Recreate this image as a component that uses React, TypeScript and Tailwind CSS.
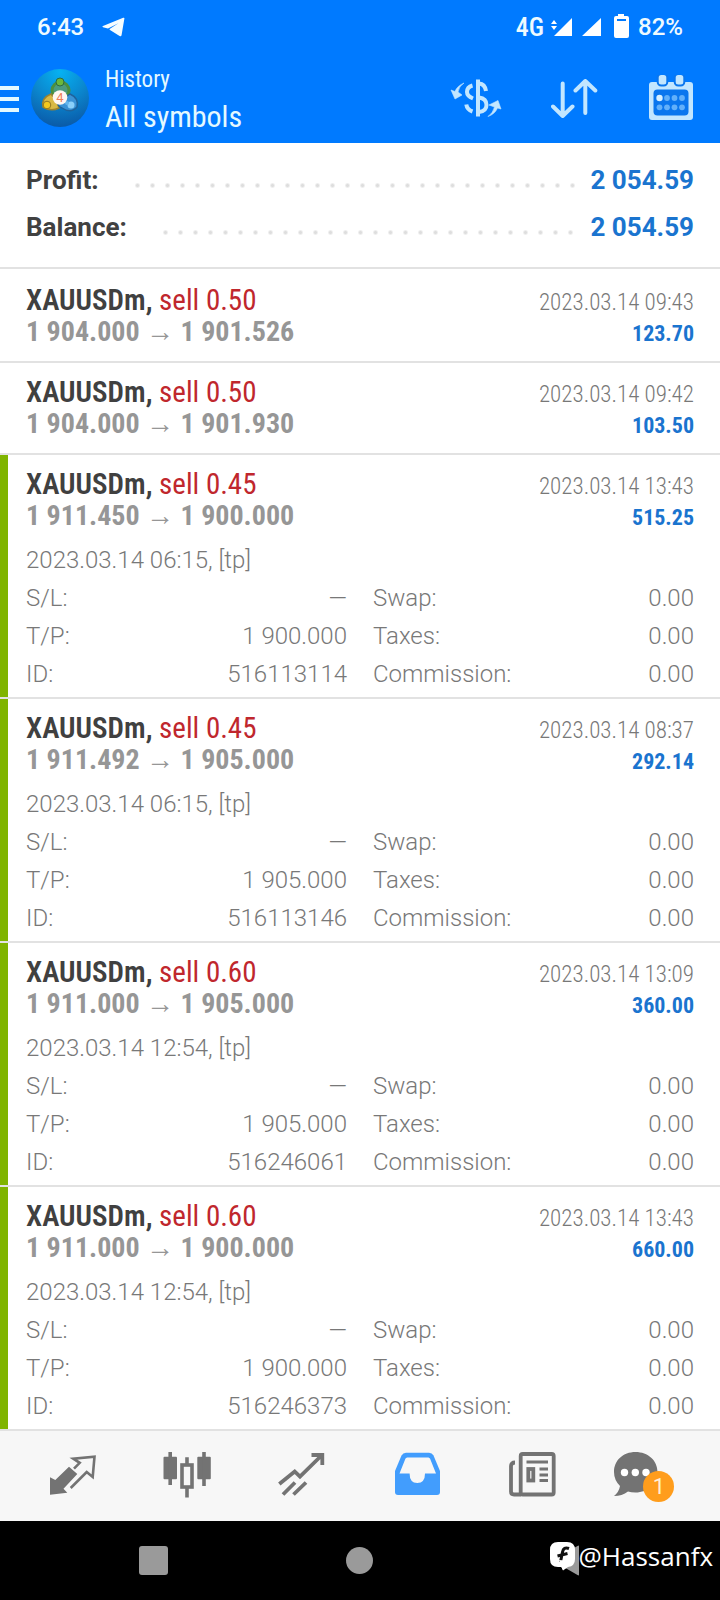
import React from "react";

type Detail = { opened: string; tp: string; id: string };

type Trade = {
  lots: string;
  from: string;
  to: string;
  time: string;
  profit: string;
  detail?: Detail;
};

const trades: Trade[] = [
  { lots: "0.50", from: "1 904.000", to: "1 901.526", time: "2023.03.14 09:43", profit: "123.70" },
  { lots: "0.50", from: "1 904.000", to: "1 901.930", time: "2023.03.14 09:42", profit: "103.50" },
  {
    lots: "0.45", from: "1 911.450", to: "1 900.000", time: "2023.03.14 13:43", profit: "515.25",
    detail: { opened: "2023.03.14 06:15, [tp]", tp: "1 900.000", id: "516113114" },
  },
  {
    lots: "0.45", from: "1 911.492", to: "1 905.000", time: "2023.03.14 08:37", profit: "292.14",
    detail: { opened: "2023.03.14 06:15, [tp]", tp: "1 905.000", id: "516113146" },
  },
  {
    lots: "0.60", from: "1 911.000", to: "1 905.000", time: "2023.03.14 13:09", profit: "360.00",
    detail: { opened: "2023.03.14 12:54, [tp]", tp: "1 905.000", id: "516246061" },
  },
  {
    lots: "0.60", from: "1 911.000", to: "1 900.000", time: "2023.03.14 13:43", profit: "660.00",
    detail: { opened: "2023.03.14 12:54, [tp]", tp: "1 900.000", id: "516246373" },
  },
];

function StatusBar() {
  return (
    <div className="flex h-[53px] items-center justify-between px-[37px] text-[24px] font-medium leading-[28px] text-[#eefaff]">
      <div className="flex items-center gap-[18px]">
        <span>6:43</span>
        <svg width="23" height="20" viewBox="0 0 23 20" aria-hidden="true">
          <path d="M22.4 1.6 19.6 18Q19.2 19.8 17.6 19L7.6 12.8V12L16.4 6.2 6 11.6 1 10.2Q-.2 9.6 1 8.9L21.2.8Q22.6.4 22.4 1.6Z" fill="#f6fdff" />
        </svg>
      </div>
      <div className="flex items-center">
        <span className="font-['Roboto_Condensed','Roboto',sans-serif] text-[26px]">4G</span>
        <svg className="ml-[7px]" width="79" height="26" viewBox="0 0 79 26" fill="#fff" aria-hidden="true">
          <path d="M0 10 3 6 6 10ZM0 12 3 16 6 12ZM21 4V22H3ZM50 4V22H31ZM67 0H73V2H76Q78 2 78 4V22Q78 24 76 24H65Q63 24 63 22V4Q63 2 65 2H67Z" />
          <path d="M66 5H75V7H66Z" fill="#007aff" />
        </svg>
        <span className="ml-[8px]">82%</span>
      </div>
    </div>
  );
}

function AppLogo() {
  return (
    <svg className="ml-[12px]" width="58" height="58" viewBox="0 0 58 58" aria-hidden="true">
      <defs>
        <radialGradient id="disc" cx="50%" cy="5%" r="95%">
          <stop offset="0" stopColor="#06b2f2" />
          <stop offset="0.5" stopColor="#0b88cf" />
          <stop offset="1" stopColor="#0a5aa8" />
        </radialGradient>
      </defs>
      <circle cx="29" cy="29" r="29" fill="url(#disc)" />
      <circle cx="29.500" cy="21.500" r="8.500" fill="#4c9b7c" stroke="#4d8f3c" strokeWidth="3" />
      <path d="M20 25Q10 29 12 38Q20 43 28 39L26 32Z" fill="#d8b945" stroke="#9b8330" strokeWidth="1.500" />
      <path d="M39 25Q48 29 46 38Q40 45 31 39Q26 37 27 33Z" fill="#3b93d6" stroke="#1f639c" strokeWidth="1.500" />
      <circle cx="29" cy="13" r="4" fill="#6cb83c" stroke="#2c6a42" />
      <circle cx="16" cy="36" r="3.800" fill="#f3c81e" stroke="#8e7726" />
      <circle cx="40" cy="36" r="3.500" fill="#8bd0fa" />
      <circle cx="36" cy="34" r="2" fill="#65b6ec" />
      <circle cx="29" cy="28.500" r="7.300" fill="#fff7f2" />
      <text x="29" y="33" textAnchor="middle" fontSize="13" fill="#ee7f5a">4</text>
    </svg>
  );
}

function AppHeader() {
  return (
    <header className="flex h-[90px] items-center pr-[27px] text-[#e4f9ff]">
      <button type="button" aria-label="Menu" className="flex w-[19px] flex-col gap-[7px] pt-[2px]">
        <span className="h-[4px] w-full bg-[#e4f9ff]" />
        <span className="h-[4px] w-full bg-[#e4f9ff]" />
        <span className="h-[4px] w-full bg-[#e4f9ff]" />
      </button>
      <AppLogo />
      <div className="ml-[16px] flex-1 pt-[6px] font-['Roboto_Condensed','Roboto',sans-serif]">
        <p className="text-[23px] leading-[32px]">History</p>
        <h1 className="text-[30px] leading-[42px]">All symbols</h1>
      </div>
      <div className="flex items-center gap-[50px] text-[#c2e6ff]">
        <button type="button" aria-label="Currency">
          <svg className="block" width="49" height="40" viewBox="1 0 49 40" overflow="visible" fill="none" stroke="currentColor" strokeWidth="4" aria-hidden="true">
            <path d="M27 1.500V38.500" />
            <path d="M28 5.500Q34 6 35 13M28 19.500Q35.500 20.500 35.500 27Q35.500 33 28 34" />
            <path d="M21.500 7.500Q16 9 16 14Q16 18 22 20.500M15.300 26.500Q16 31.500 21.500 33.500" />
            <path d="M13 5Q8 8 7 14L11 17 4 21 0 12 4 13.500Q6 8 13 5ZM37 38.500Q42 35 43.500 29L38 27 47 22.500 50 31 46.500 30Q44 36 37 38.500Z" fill="currentColor" strokeWidth="0.600" />
          </svg>
        </button>
        <button type="button" aria-label="Sort">
          <svg className="block" width="48" height="41" viewBox="0 0 48 41" fill="none" stroke="currentColor" strokeWidth="4" strokeLinecap="round" strokeLinejoin="round" aria-hidden="true">
            <path d="M11.700 5.500V38M2 28.500 11.700 38 21.500 28.500M34.300 35V3M24.500 12.500 34.300 3 44.300 12.500" />
          </svg>
        </button>
        <button type="button" aria-label="Calendar">
          <svg className="block" width="44" height="46" viewBox="0 0 44 46" aria-hidden="true">
            <rect x="0" y="7" width="44" height="38" rx="3" fill="currentColor" />
            <rect x="4.500" y="14.500" width="35" height="26" rx="4" fill="#0a76ee" />
            <rect x="8.700" y="-1" width="9.600" height="11.500" rx="3.500" fill="currentColor" stroke="#0a76ee" strokeWidth="2" />
            <rect x="25.700" y="-1" width="9.600" height="11.500" rx="3.500" fill="currentColor" stroke="#0a76ee" strokeWidth="2" />
            <circle cx="10.500" cy="23" r="3.200" fill="#d8f0ff" />
            <g fill="#62b0fa">
              <circle cx="18" cy="23" r="2.900" />
              <circle cx="25.500" cy="23" r="2.900" />
              <circle cx="33" cy="23" r="2.900" />
              <circle cx="10.500" cy="32.300" r="2.900" />
              <circle cx="18" cy="32.300" r="2.900" />
              <circle cx="25.500" cy="32.300" r="2.900" />
              <circle cx="33" cy="32.300" r="2.900" />
            </g>
          </svg>
        </button>
      </div>
    </header>
  );
}

function Amount({ label, value }: { label: string; value: string }) {
  return (
    <div className="flex h-[47px] items-center text-[26px] font-bold text-[#414141]">
      <dt>{label}</dt>
      <span className="ml-[31px] mr-[10px] mt-[10px] h-[15px] flex-1 bg-[radial-gradient(circle,#dedede_1px,transparent_3px)] bg-[length:15px_15px] bg-repeat-x" />
      <dd className="text-[#1a74cf]">{value}</dd>
    </div>
  );
}

function Field({ label, value }: { label: string; value: string }) {
  return (
    <div className="flex justify-between">
      <dt>{label}</dt>
      <dd>{value}</dd>
    </div>
  );
}

function TradeDetail({ detail }: { detail: Detail }) {
  return (
    <div className="mt-[9px] text-[24px] font-light leading-[38px] text-[#787878]">
      <p>{detail.opened}</p>
      <dl className="grid grid-cols-2 gap-x-[26px]">
        <Field label="S/L:" value="—" />
        <Field label="Swap:" value="0.00" />
        <Field label="T/P:" value={detail.tp} />
        <Field label="Taxes:" value="0.00" />
        <Field label="ID:" value={detail.id} />
        <Field label="Commission:" value="0.00" />
      </dl>
    </div>
  );
}

function TradeRow({ trade }: { trade: Trade }) {
  return (
    <li className="flex border-b-2 border-[#e2e2e2]">
      <span className={trade.detail ? "w-[8px] bg-[#7fb400]" : "w-[8px]"} />
      <div className={trade.detail ? "flex-1 pb-[4px] pl-[18px] pr-[26px] pt-[13px]" : "flex-1 py-[13px] pl-[18px] pr-[26px]"}>
        <div className="font-['Roboto_Condensed','Roboto',sans-serif] leading-[32px]">
          <div className="flex h-[32px] items-baseline justify-between">
            <h2 className="text-[29px] text-[#c0272d]">
              <span className="font-semibold text-[#404040]">XAUUSDm,</span> sell {trade.lots}
            </h2>
            <time className="text-[23px] font-light text-[#787878]">{trade.time}</time>
          </div>
          <div className="flex h-[32px] items-baseline justify-between font-bold">
            <p className="text-[28px] text-[#969696]">
              {trade.from} → {trade.to}
            </p>
            <p className="text-[22px] text-[#1a74cf]">{trade.profit}</p>
          </div>
        </div>
        {trade.detail && <TradeDetail detail={trade.detail} />}
      </div>
    </li>
  );
}

function TabBar() {
  return (
    <nav className="grid h-[90px] grid-cols-6 bg-[#f7f7f7] px-[14px] text-[#737373]">
      <button type="button" aria-label="Quotes" className="flex items-center justify-center">
        <svg width="48" height="48" viewBox="0 0 48 48" aria-hidden="true">
          <path d="M2 25.300V42.700L19.300 40.700 15.500 36.700 29.300 22 21 14.700 7.300 28Z" fill="currentColor" />
          <path d="M26 16.700 31.700 10.800 25.300 6.700 46.500 4.600 44.700 25 38.700 20 22.700 36" fill="none" stroke="currentColor" strokeWidth="2.600" />
        </svg>
      </button>
      <button type="button" aria-label="Charts" className="flex items-center justify-center">
        <svg width="48" height="48" viewBox="0 0 48 48" aria-hidden="true">
          <g fill="currentColor">
            <rect x="0.500" y="4.700" width="13.500" height="22.500" rx="1" />
            <rect x="34.300" y="4.700" width="13.500" height="22.500" rx="1" />
          </g>
          <rect x="19" y="13" width="10" height="22" fill="none" stroke="currentColor" strokeWidth="3.600" />
          <path d="M7.200 0V33M41 0V34M24 5.300V12M24 36V45.500" stroke="currentColor" strokeWidth="3.600" />
        </svg>
      </button>
      <button type="button" aria-label="Trade" className="flex items-center justify-center">
        <svg width="48" height="48" viewBox="0 0 48 48" fill="none" stroke="currentColor" strokeWidth="3.800" aria-hidden="true">
          <path d="M1.300 32 16.700 19.500 22 24.700 44 3M33.500 3H44.300V13M5 42.500 17 30.500M15.500 42.500 28 30.500" />
        </svg>
      </button>
      <button type="button" aria-label="History" aria-current="page" className="flex items-center justify-center">
        <svg width="48" height="48" viewBox="0 0 48 48" aria-hidden="true">
          <path d="M12 .700H35Q38 .700 39.500 3.500L46 19V40Q46 43 43 43H4Q1 43 1 40V19L7.500 3.500Q9 .700 12 .700Z" fill="#429dfd" />
          <path d="M13 5.500H34.500L36 6.500 42 21.500H31Q31 31 23.300 31T15.600 21.500H5.500L11.500 6.500Z" fill="#f7f7f7" />
        </svg>
      </button>
      <button type="button" aria-label="News" className="flex items-center justify-center">
        <svg width="48" height="48" viewBox="0 0 48 48" fill="none" stroke="currentColor" strokeWidth="3.800" aria-hidden="true">
          <rect x="11.700" y="2" width="33" height="40.500" rx="2" />
          <path d="M6 10.500Q2 10.500 2 14V39.500Q2 42.500 5 42.500H12" />
          <path d="M17.500 10H39M30.500 17H39M30.500 23H39M30.500 28.500H39" strokeWidth="3.200" />
          <rect x="19.300" y="17" width="5" height="11.500" strokeWidth="3.800" />
        </svg>
      </button>
      <button type="button" aria-label="Messages, 1 unread" className="flex items-center justify-center">
        <span className="relative block h-[48px] w-[68px]">
          <svg width="68" height="48" viewBox="0 0 68 48" aria-hidden="true">
            <path d="M21.500 0C34 0 43.500 8.500 43.500 20S34 40.500 21.500 40.500Q17 40.500 14 39.500Q8 44 0 44Q5 40 6 34Q0 28 0 20C0 8.500 9 0 21.500 0Z" fill="currentColor" />
            <circle cx="10.500" cy="20.500" r="3.700" fill="#fff" />
            <circle cx="21.300" cy="20.500" r="3.700" fill="#fff" />
            <circle cx="32" cy="20.500" r="3.700" fill="#fff" />
          </svg>
          <span className="absolute left-[29px] top-[19px] flex h-[31px] w-[31px] items-center justify-center rounded-full bg-[#ff9d1c] text-[22px] leading-[31px] text-[#fff0d8]">1</span>
        </span>
      </button>
    </nav>
  );
}

function SystemBar() {
  return (
    <div className="relative grid h-[79px] grid-cols-3 bg-black px-[50px]">
      <button type="button" aria-label="Recent apps" className="flex items-center justify-center">
        <span className="h-[29px] w-[29px] rounded-[3px] bg-[#9a9a9a]" />
      </button>
      <button type="button" aria-label="Home" className="flex items-center justify-center">
        <span className="h-[27px] w-[27px] rounded-full bg-[#9a9a9a]" />
      </button>
      <button type="button" aria-label="Back" className="flex items-center justify-center">
        <svg width="26" height="31" viewBox="0 0 26 31" aria-hidden="true">
          <path d="M25 1.500V29.500Q25 31 23.500 30L1 17Q-.5 15.500 1 14L23.500 1Q25 0 25 1.500Z" fill="#9a9a9a" />
        </svg>
      </button>
      <div className="absolute right-[7px] top-[20px] flex items-center gap-[4px] text-white">
        <svg width="25" height="29" viewBox="0 0 25 29" aria-hidden="true">
          <path d="M8 0H17Q25 0 25 8V17Q25 24 18 25L13 28.500 11.500 25H8Q0 25 0 17V8Q0 0 8 0Z" fill="#fff" />
          <path d="M19 6.500Q13.500 4.500 12.500 10L10.500 20M7.500 14 17.500 11.500" fill="none" stroke="#111" strokeWidth="3" />
          <path d="M9 18 15 18.500 13 28 11 24.500Z" fill="#fff" />
        </svg>
        <span className="font-['Open_Sans',sans-serif] text-[26px] leading-[30px]">@Hassanfx</span>
      </div>
    </div>
  );
}

export default function App() {
  return (
    <div className="flex min-h-screen flex-col bg-white font-['Roboto',sans-serif]">
      <div className="bg-[#007aff]">
        <StatusBar />
        <AppHeader />
      </div>
      <main className="flex-1">
        <dl className="border-b-2 border-[#e2e2e2] px-[26px] pb-[16px] pt-[14px]">
          <Amount label="Profit:" value="2 054.59" />
          <Amount label="Balance:" value="2 054.59" />
        </dl>
        <ul className="pt-[2px]">
          {trades.map((trade, i) => (
            <TradeRow key={i} trade={trade} />
          ))}
        </ul>
      </main>
      <TabBar />
      <SystemBar />
    </div>
  );
}
